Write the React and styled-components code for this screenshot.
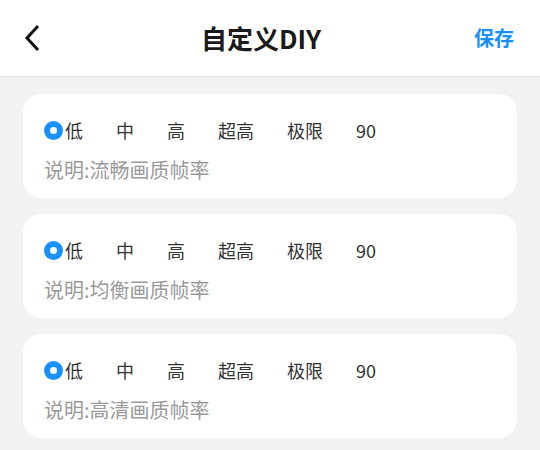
import React from "react";
import styled, { createGlobalStyle } from "styled-components";

const GlobalStyle = createGlobalStyle`
  html, body {
    margin: 0;
    padding: 0;
    background: #f2f2f2;
    font-family: "Noto Sans CJK SC", "Noto Sans", sans-serif;
  }
`;

const options = ["低", "中", "高", "超高", "极限", "90"];

const presets = [
  { id: 1, desc: "说明:流畅画质帧率" },
  { id: 2, desc: "说明:均衡画质帧率" },
  { id: 3, desc: "说明:高清画质帧率" },
];

const BackIcon = () => (
  <svg width="16" height="28" viewBox="0 0 16 28" fill="none">
    <path
      d="M14 2 L3 14 L14 26"
      stroke="#111"
      strokeWidth="3"
      strokeLinecap="butt"
      strokeLinejoin="miter"
    />
  </svg>
);

const App = () => {
  return (
    <>
      <GlobalStyle />
      <Page>
        <Header>
          <BackButton>
            <BackIcon />
          </BackButton>
          <Title>自定义DIY</Title>
          <SaveButton>保存</SaveButton>
        </Header>
        <List>
          {presets.map((p) => (
            <Card key={p.id}>
              <OptionRow>
                {options.map((o, i) => (
                  <Option key={o}>
                    {i === 0 && <Radio />}
                    {o}
                  </Option>
                ))}
              </OptionRow>
              <Desc>{p.desc}</Desc>
            </Card>
          ))}
        </List>
      </Page>
    </>
  );
};

const Page = styled.div`
  width: 540px;
  min-height: 450px;
  background: #f2f2f2;
`;

const Header = styled.div`
  height: 77px;
  background: #fff;
  border-bottom: 1px solid #e6e6e6;
  display: flex;
  align-items: center;
  justify-content: space-between;
  padding: 0 26px 0 24px;
  box-sizing: border-box;
`;

const BackButton = styled.div`
  width: 60px;
  display: flex;
  align-items: center;
  margin-top: -1px;
`;

const Title = styled.div`
  font-size: 26px;
  font-weight: 700;
  color: #1a1a1a;
  margin-top: -2px;
  margin-right: 16px;
`;

const SaveButton = styled.div`
  width: 60px;
  text-align: right;
  font-size: 20px;
  font-weight: 600;
  color: #1890ff;
  margin-top: -2px;
`;

const List = styled.div`
  display: flex;
  flex-direction: column;
  gap: 16px;
  padding: 17px 23px 0 23px;
`;

const Card = styled.div`
  height: 104px;
  background: #fff;
  border-radius: 18px;
  padding: 23px 21px 0 21px;
  box-sizing: border-box;
`;

const OptionRow = styled.div`
  display: flex;
  align-items: center;
  gap: 33px;
  font-size: 18px;
  color: #333;
  height: 26px;
`;

const Option = styled.div`
  display: flex;
  align-items: center;
`;

const Radio = styled.span`
  width: 19px;
  height: 19px;
  border-radius: 50%;
  background: #1890ff;
  margin-right: 2px;
  position: relative;
  &::after {
    content: "";
    position: absolute;
    left: 6px;
    top: 6px;
    width: 7px;
    height: 7px;
    border-radius: 50%;
    background: #fff;
  }
`;

const Desc = styled.div`
  margin-top: 13px;
  font-size: 20px;
  color: #9a9a9a;
  line-height: 28px;
`;

export default App;
